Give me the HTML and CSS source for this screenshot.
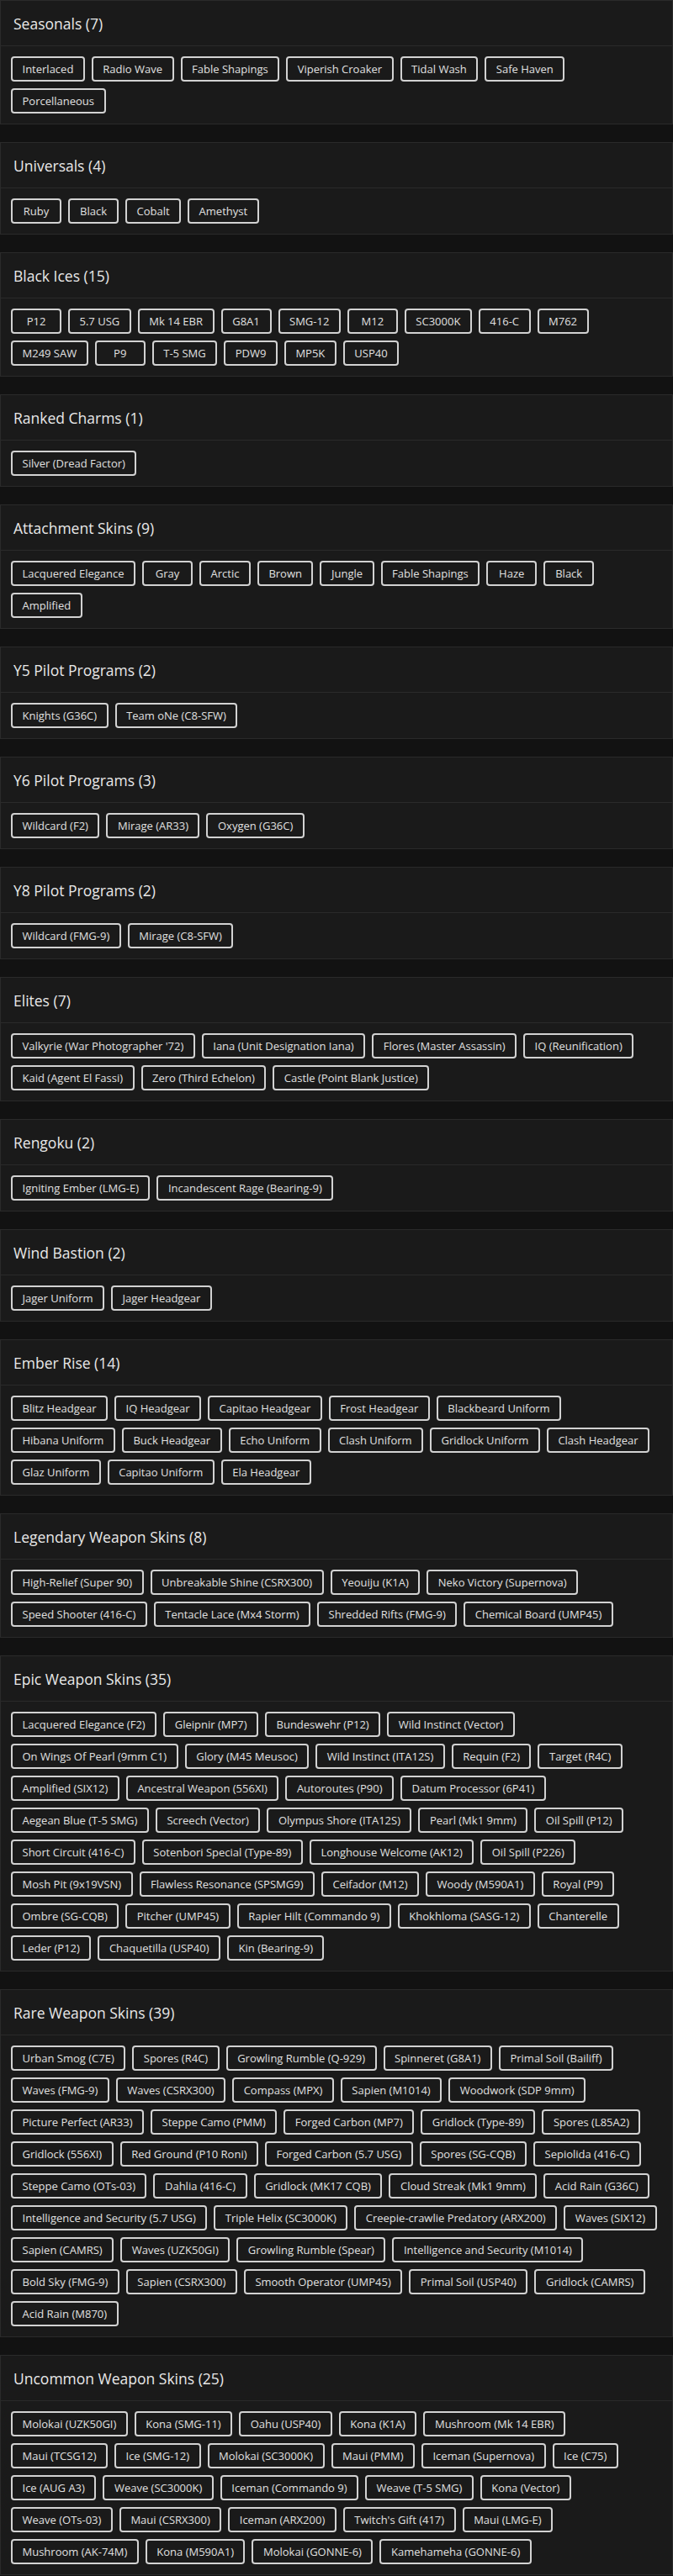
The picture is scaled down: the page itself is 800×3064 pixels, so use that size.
FILE: index.html
```html
<!DOCTYPE html>
<html lang="en">
<head>
    <meta charset="UTF-8">
    <meta name="viewport" content="width=device-width, initial-scale=1.0">
    <link rel="stylesheet" href="styles.css">
</head>
<body>
    <div class="inventory">
        <div class="card">
            <div class="card-header">Seasonals (7)</div>
            <div class="card-body">
                <span class="tag">Interlaced</span>
                <span class="tag">Radio Wave</span>
                <span class="tag">Fable Shapings</span>
                <span class="tag">Viperish Croaker</span>
                <span class="tag">Tidal Wash</span>
                <span class="tag">Safe Haven</span>
                <span class="tag">Porcellaneous</span>
            </div>
        </div>

        <div class="card">
            <div class="card-header">Universals (4)</div>
            <div class="card-body">
                <span class="tag">Ruby</span>
                <span class="tag">Black</span>
                <span class="tag">Cobalt</span>
                <span class="tag">Amethyst</span>
            </div>
        </div>

        <div class="card">
            <div class="card-header">Black Ices (15)</div>
            <div class="card-body">
                <span class="tag">P12</span>
                <span class="tag">5.7 USG</span>
                <span class="tag">Mk 14 EBR</span>
                <span class="tag">G8A1</span>
                <span class="tag">SMG-12</span>
                <span class="tag">M12</span>
                <span class="tag">SC3000K</span>
                <span class="tag">416-C</span>
                <span class="tag">M762</span>
                <span class="tag">M249 SAW</span>
                <span class="tag">P9</span>
                <span class="tag">T-5 SMG</span>
                <span class="tag">PDW9</span>
                <span class="tag">MP5K</span>
                <span class="tag">USP40</span>
            </div>
        </div>

        <div class="card">
            <div class="card-header">Ranked Charms (1)</div>
            <div class="card-body">
                <span class="tag">Silver (Dread Factor)</span>
            </div>
        </div>

        <div class="card">
            <div class="card-header">Attachment Skins (9)</div>
            <div class="card-body">
                <span class="tag">Lacquered Elegance</span>
                <span class="tag">Gray</span>
                <span class="tag">Arctic</span>
                <span class="tag">Brown</span>
                <span class="tag">Jungle</span>
                <span class="tag">Fable Shapings</span>
                <span class="tag">Haze</span>
                <span class="tag">Black</span>
                <span class="tag">Amplified</span>
            </div>
        </div>

        <div class="card">
            <div class="card-header">Y5 Pilot Programs (2)</div>
            <div class="card-body">
                <span class="tag">Knights (G36C)</span>
                <span class="tag">Team oNe (C8-SFW)</span>
            </div>
        </div>

        <div class="card">
            <div class="card-header">Y6 Pilot Programs (3)</div>
            <div class="card-body">
                <span class="tag">Wildcard (F2)</span>
                <span class="tag">Mirage (AR33)</span>
                <span class="tag">Oxygen (G36C)</span>
            </div>
        </div>

        <div class="card">
            <div class="card-header">Y8 Pilot Programs (2)</div>
            <div class="card-body">
                <span class="tag">Wildcard (FMG-9)</span>
                <span class="tag">Mirage (C8-SFW)</span>
            </div>
        </div>

        <div class="card">
            <div class="card-header">Elites (7)</div>
            <div class="card-body">
                <span class="tag">Valkyrie (War Photographer '72)</span>
                <span class="tag">Iana (Unit Designation Iana)</span>
                <span class="tag">Flores (Master Assassin)</span>
                <span class="tag">IQ (Reunification)</span>
                <span class="tag">Kaid (Agent El Fassi)</span>
                <span class="tag">Zero (Third Echelon)</span>
                <span class="tag">Castle (Point Blank Justice)</span>
            </div>
        </div>

        <div class="card">
            <div class="card-header">Rengoku (2)</div>
            <div class="card-body">
                <span class="tag">Igniting Ember (LMG-E)</span>
                <span class="tag">Incandescent Rage (Bearing-9)</span>
            </div>
        </div>

        <div class="card">
            <div class="card-header">Wind Bastion (2)</div>
            <div class="card-body">
                <span class="tag">Jager Uniform</span>
                <span class="tag">Jager Headgear</span>
            </div>
        </div>

        <div class="card">
            <div class="card-header">Ember Rise (14)</div>
            <div class="card-body">
                <span class="tag">Blitz Headgear</span>
                <span class="tag">IQ Headgear</span>
                <span class="tag">Capitao Headgear</span>
                <span class="tag">Frost Headgear</span>
                <span class="tag">Blackbeard Uniform</span>
                <span class="tag">Hibana Uniform</span>
                <span class="tag">Buck Headgear</span>
                <span class="tag">Echo Uniform</span>
                <span class="tag">Clash Uniform</span>
                <span class="tag">Gridlock Uniform</span>
                <span class="tag">Clash Headgear</span>
                <span class="tag">Glaz Uniform</span>
                <span class="tag">Capitao Uniform</span>
                <span class="tag">Ela Headgear</span>
            </div>
        </div>

        <div class="card">
            <div class="card-header">Legendary Weapon Skins (8)</div>
            <div class="card-body">
                <span class="tag">High-Relief (Super 90)</span>
                <span class="tag">Unbreakable Shine (CSRX300)</span>
                <span class="tag">Yeouiju (K1A)</span>
                <span class="tag">Neko Victory (Supernova)</span>
                <span class="tag">Speed Shooter (416-C)</span>
                <span class="tag">Tentacle Lace (Mx4 Storm)</span>
                <span class="tag">Shredded Rifts (FMG-9)</span>
                <span class="tag">Chemical Board (UMP45)</span>
            </div>
        </div>

        <div class="card">
            <div class="card-header">Epic Weapon Skins (35)</div>
            <div class="card-body">
                <span class="tag">Lacquered Elegance (F2)</span>
                <span class="tag">Gleipnir (MP7)</span>
                <span class="tag">Bundeswehr (P12)</span>
                <span class="tag">Wild Instinct (Vector)</span>
                <span class="tag">On Wings Of Pearl (9mm C1)</span>
                <span class="tag">Glory (M45 Meusoc)</span>
                <span class="tag">Wild Instinct (ITA12S)</span>
                <span class="tag">Requin (F2)</span>
                <span class="tag">Target (R4C)</span>
                <span class="tag">Amplified (SIX12)</span>
                <span class="tag">Ancestral Weapon (556XI)</span>
                <span class="tag">Autoroutes (P90)</span>
                <span class="tag">Datum Processor (6P41)</span>
                <span class="tag">Aegean Blue (T-5 SMG)</span>
                <span class="tag">Screech (Vector)</span>
                <span class="tag">Olympus Shore (ITA12S)</span>
                <span class="tag">Pearl (Mk1 9mm)</span>
                <span class="tag">Oil Spill (P12)</span>
                <span class="tag">Short Circuit (416-C)</span>
                <span class="tag">Sotenbori Special (Type-89)</span>
                <span class="tag">Longhouse Welcome (AK12)</span>
                <span class="tag">Oil Spill (P226)</span>
                <span class="tag">Mosh Pit (9x19VSN)</span>
                <span class="tag">Flawless Resonance (SPSMG9)</span>
                <span class="tag">Ceifador (M12)</span>
                <span class="tag">Woody (M590A1)</span>
                <span class="tag">Royal (P9)</span>
                <span class="tag">Ombre (SG-CQB)</span>
                <span class="tag">Pitcher (UMP45)</span>
                <span class="tag">Rapier Hilt (Commando 9)</span>
                <span class="tag">Khokhloma (SASG-12)</span>
                <span class="tag">Chanterelle</span>
                <span class="tag">Leder (P12)</span>
                <span class="tag">Chaquetilla (USP40)</span>
                <span class="tag">Kin (Bearing-9)</span>
            </div>
        </div>

        <div class="card">
            <div class="card-header">Rare Weapon Skins (39)</div>
            <div class="card-body">
                <span class="tag">Urban Smog (C7E)</span>
                <span class="tag">Spores (R4C)</span>
                <span class="tag">Growling Rumble (Q-929)</span>
                <span class="tag">Spinneret (G8A1)</span>
                <span class="tag">Primal Soil (Bailiff)</span>
                <span class="tag">Waves (FMG-9)</span>
                <span class="tag">Waves (CSRX300)</span>
                <span class="tag">Compass (MPX)</span>
                <span class="tag">Sapien (M1014)</span>
                <span class="tag">Woodwork (SDP 9mm)</span>
                <span class="tag">Picture Perfect (AR33)</span>
                <span class="tag">Steppe Camo (PMM)</span>
                <span class="tag">Forged Carbon (MP7)</span>
                <span class="tag">Gridlock (Type-89)</span>
                <span class="tag">Spores (L85A2)</span>
                <span class="tag">Gridlock (556XI)</span>
                <span class="tag">Red Ground (P10 Roni)</span>
                <span class="tag">Forged Carbon (5.7 USG)</span>
                <span class="tag">Spores (SG-CQB)</span>
                <span class="tag">Sepiolida (416-C)</span>
                <span class="tag">Steppe Camo (OTs-03)</span>
                <span class="tag">Dahlia (416-C)</span>
                <span class="tag">Gridlock (MK17 CQB)</span>
                <span class="tag">Cloud Streak (Mk1 9mm)</span>
                <span class="tag">Acid Rain (G36C)</span>
                <span class="tag">Intelligence and Security (5.7 USG)</span>
                <span class="tag">Triple Helix (SC3000K)</span>
                <span class="tag">Creepie-crawlie Predatory (ARX200)</span>
                <span class="tag">Waves (SIX12)</span>
                <span class="tag">Sapien (CAMRS)</span>
                <span class="tag">Waves (UZK50GI)</span>
                <span class="tag">Growling Rumble (Spear)</span>
                <span class="tag">Intelligence and Security (M1014)</span>
                <span class="tag">Bold Sky (FMG-9)</span>
                <span class="tag">Sapien (CSRX300)</span>
                <span class="tag">Smooth Operator (UMP45)</span>
                <span class="tag">Primal Soil (USP40)</span>
                <span class="tag">Gridlock (CAMRS)</span>
                <span class="tag">Acid Rain (M870)</span>
            </div>
        </div>

        <div class="card">
            <div class="card-header">Uncommon Weapon Skins (25)</div>
            <div class="card-body">
                <span class="tag">Molokai (UZK50GI)</span>
                <span class="tag">Kona (SMG-11)</span>
                <span class="tag">Oahu (USP40)</span>
                <span class="tag">Kona (K1A)</span>
                <span class="tag">Mushroom (Mk 14 EBR)</span>
                <span class="tag">Maui (TCSG12)</span>
                <span class="tag">Ice (SMG-12)</span>
                <span class="tag">Molokai (SC3000K)</span>
                <span class="tag">Maui (PMM)</span>
                <span class="tag">Iceman (Supernova)</span>
                <span class="tag">Ice (C75)</span>
                <span class="tag">Ice (AUG A3)</span>
                <span class="tag">Weave (SC3000K)</span>
                <span class="tag">Iceman (Commando 9)</span>
                <span class="tag">Weave (T-5 SMG)</span>
                <span class="tag">Kona (Vector)</span>
                <span class="tag">Weave (OTs-03)</span>
                <span class="tag">Maui (CSRX300)</span>
                <span class="tag">Iceman (ARX200)</span>
                <span class="tag">Twitch's Gift (417)</span>
                <span class="tag">Maui (LMG-E)</span>
                <span class="tag">Mushroom (AK-74M)</span>
                <span class="tag">Kona (M590A1)</span>
                <span class="tag">Molokai (GONNE-6)</span>
                <span class="tag">Kamehameha (GONNE-6)</span>
            </div>
        </div>
    </div>
</body>
</html>
```

FILE: styles.css
```css
* {
    box-sizing: border-box;
    margin: 0;
    padding: 0;
}

body {
    background: #121212;
    color: #e2e2e2;
    font-family: 'Open Sans', 'Liberation Sans', sans-serif;
}

.inventory {
    display: flex;
    flex-direction: column;
    gap: 21px;
}

.card {
    background: #1a1a1a;
    border: 1px solid #2a2a2a;
}

.card-header {
    height: 54px;
    display: flex;
    align-items: center;
    padding: 0 15px;
    font-size: 17.5px;
    font-weight: 500;
    color: #e8e8e8;
    border-bottom: 1px solid #2a2a2a;
}

.card-body {
    display: flex;
    flex-wrap: wrap;
    padding: 8px;
}

.tag {
    display: inline-flex;
    align-items: center;
    justify-content: center;
    min-width: 60px;
    height: 30px;
    margin: 4px;
    padding: 0 11.5px;
    border: 2px solid #d2d2d2;
    border-radius: 4px;
    font-size: 13px;
    color: #e0e0e0;
    white-space: nowrap;
}
```
